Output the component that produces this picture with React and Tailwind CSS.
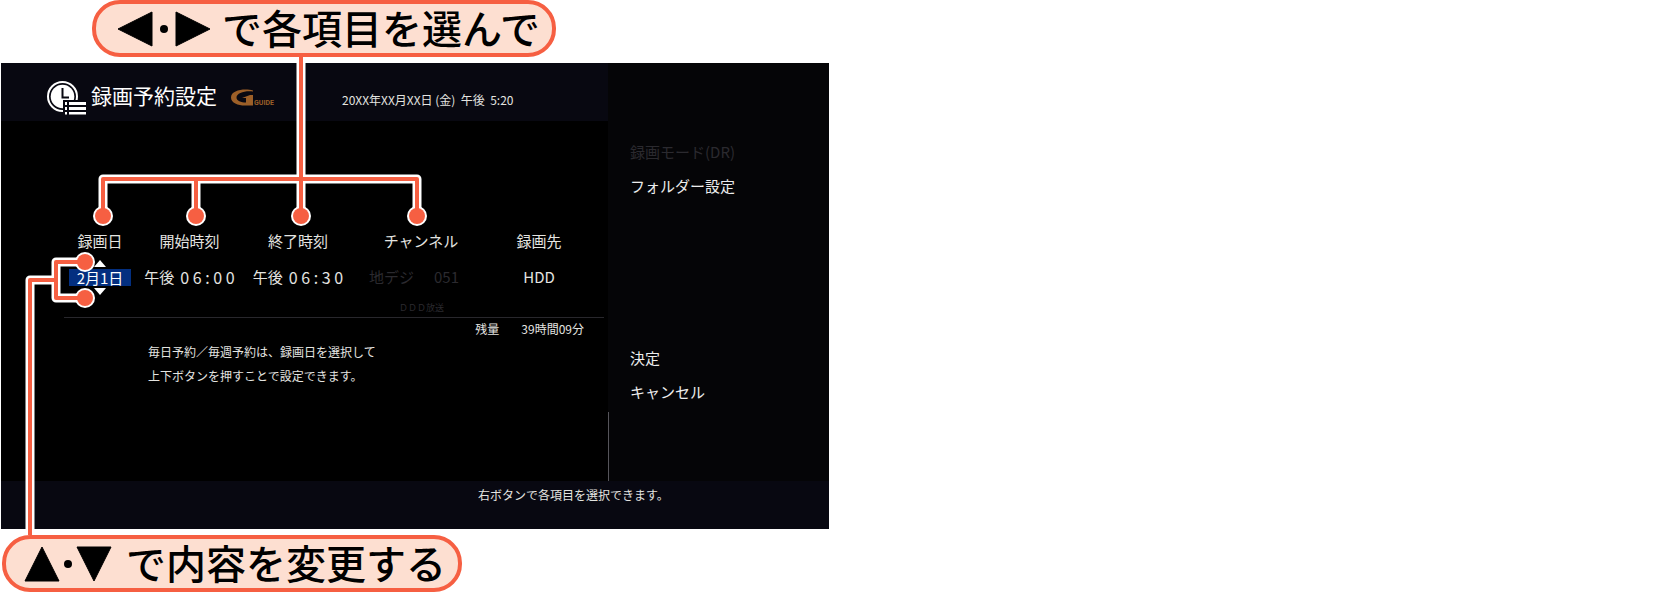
import { clsx } from 'clsx'

const columns = [
  { label: '録画日', width: 'w-[62px]' },
  { label: '開始時刻', width: 'w-[117px]' },
  { label: '終了時刻', width: 'w-[100px]' },
  { label: 'チャンネル', width: 'w-[146px]' },
  { label: '録画先', width: 'w-[90px]' },
]

const menuTop = [
  { label: '録画モード(DR)', disabled: true },
  { label: 'フォルダー設定' },
]

const menuBottom = [{ label: '決定' }, { label: 'キャンセル' }]

function ClockListIcon() {
  return (
    <svg viewBox="0 0 40 34" className="w-10 h-[34px] shrink-0" aria-hidden="true">
      <circle cx="15.5" cy="15.5" r="14.5" fill="none" stroke="#fff" strokeWidth="2" />
      <circle cx="15.5" cy="15.5" r="11.8" fill="#fff" />
      <path d="M15.500 7v9.500H22" fill="none" stroke="#080811" strokeWidth="2" />
      <path d="M16 19h24v15H16z" fill="#080811" />
      <path d="M18 21h2v3h-2zM18 26h2v3h-2zM18 31h2v2.500h-2z" fill="#fff" />
      <path d="M22 21h17v3H22zM22 26h17v3H22zM22 31h17v2.500H22z" fill="#fff" />
    </svg>
  )
}

function GuideLogo() {
  return (
    <svg viewBox="0 0 46 18" className="w-[46px] h-[18px] shrink-0" role="img" aria-label="G GUIDE">
      <path
        d="M22 1.500C14-.8 0 .8 0 8.500c0 5.500 7 8 14 8h8V6h-3l-8 3h4v4.500c-5 0-9.500-1.500-9.500-5C5.500 4 14 1.500 22 2.500z"
        fill="#9c5f28"
      />
      <text x="23" y="16" fill="#9c5f28" fontSize="7" fontWeight="700" fontFamily="Roboto, sans-serif">
        GUIDE
      </text>
    </svg>
  )
}

function Callout({ children, className }) {
  return (
    <div
      className={clsx(
        'flex items-center w-fit h-[57px] rounded-[28px] border-4 border-[#f65f42] bg-[#fddfd1] text-black text-[40px] leading-none font-medium whitespace-nowrap',
        className
      )}
    >
      {children}
    </div>
  )
}

function LeftRightKeys() {
  return (
    <svg viewBox="0 0 92 36" className="w-[92px] h-9 shrink-0" role="img" aria-label="左・右">
      <path d="M0 18 34 1v34zM58 1l34 17-34 17z" stroke="#000" strokeLinejoin="round" />
      <circle cx="46" cy="18" r="4" />
    </svg>
  )
}

function UpDownKeys() {
  return (
    <svg viewBox="0 0 88 36" className="w-[88px] h-9 shrink-0" role="img" aria-label="上・下">
      <path d="M18 1l17 34H1zM53 1h34L70 35z" stroke="#000" strokeLinejoin="round" />
      <circle cx="44" cy="18" r="4" />
    </svg>
  )
}

// Leader lines from the two callouts to the fields they explain
function Leaders() {
  const lines =
    'M301 57V216M103 216V179H417V216M196 179V216M30 535V280H56M85 262H56V298H85'
  const dots = [
    [103, 216],
    [196, 216],
    [301, 216],
    [417, 216],
    [85, 262],
    [85, 298],
  ]
  return (
    <svg viewBox="0 0 829 592" className="absolute left-0 top-0 w-[829px] h-[592px] pointer-events-none" fill="none" aria-hidden="true">
      <path d={lines} stroke="#fff" strokeWidth="9" strokeLinejoin="round" />
      {dots.map(([x, y]) => (
        <circle key={`${x}-${y}`} cx={x} cy={y} r="10" fill="#fff" />
      ))}
      <path d={lines} stroke="#f65f42" strokeWidth="4" strokeLinejoin="round" />
      {dots.map(([x, y]) => (
        <circle key={`${x}-${y}`} cx={x} cy={y} r="8" fill="#f65f42" />
      ))}
    </svg>
  )
}

function Spinner({ value }) {
  return (
    <div className="flex flex-col items-center gap-0.5">
      <button type="button" aria-label="次の日" className="block">
        <svg viewBox="0 0 12 7" className="w-3 h-[7px]" fill="#fff">
          <path d="M6 0l6 7H0z" />
        </svg>
      </button>
      <span className="w-full h-[17px] leading-[17px] bg-[#032f80] text-white">{value}</span>
      <button type="button" aria-label="前の日" className="block">
        <svg viewBox="0 0 12 7" className="w-3 h-[7px]" fill="#fff">
          <path d="M0 0h12L6 7z" />
        </svg>
      </button>
    </div>
  )
}

function Time({ half, digits }) {
  return (
    <div className="flex items-center justify-center gap-1.5">
      <span>{half}</span>
      <span className="text-base leading-6">{digits}</span>
    </div>
  )
}

function MenuItem({ label, disabled }) {
  return (
    <button
      type="button"
      disabled={disabled}
      className={clsx('block h-[34px] text-left text-[15px]', disabled ? 'text-[#2b2a2f]' : 'text-[#ececec]')}
    >
      {label}
    </button>
  )
}

export default function App() {
  return (
    <main className="relative w-full max-w-[829px] font-['Noto_Sans_CJK_JP',sans-serif]">
      <Callout className="ml-[92px] pl-[22px] pr-3 gap-3">
        <LeftRightKeys />
        <span className="pb-1">で各項目を選んで</span>
      </Callout>

      <section className="mt-1.5 ml-px bg-black text-[#e4e4e0]">
        <div className="flex bg-[#050507]">
          <div className="flex-1 min-w-0 bg-black">
            <header className="flex items-center h-[58px] pl-[46px] pt-3 bg-[#080811]">
              <ClockListIcon />
              <h1 className="ml-1 pb-1.5 text-[21px] leading-none text-white whitespace-nowrap">録画予約設定</h1>
              <div className="ml-3.5">
                <GuideLogo />
              </div>
              <time className="ml-[65px] pt-1 text-xs font-['Liberation_Sans_Narrow','Noto_Sans_CJK_JP',sans-serif] whitespace-pre">
                20XX年XX月XX日 (金)  午後  5:20
              </time>
            </header>

            <div className="pl-[5px] pt-[108px] ml-[63px] mr-1 border-b border-[#28272c]">
              <table className="table-fixed w-[515px] text-[15px] text-center whitespace-nowrap">
                <thead>
                  <tr>
                    {columns.map((c) => (
                      <th key={c.label} scope="col" className={clsx('h-6 p-0 leading-6 font-normal', c.width)}>
                        {c.label}
                      </th>
                    ))}
                  </tr>
                </thead>
                <tbody>
                  <tr className="h-12">
                    <td className="p-0">
                      <Spinner value="2月1日" />
                    </td>
                    <td className="p-0">
                      <Time half="午後" digits="0 6 : 0 0" />
                    </td>
                    <td className="p-0">
                      <Time half="午後" digits="0 6 : 3 0" />
                    </td>
                    <td className="p-0 text-[#2b2a2f]">
                      <div className="flex gap-5 pl-[21px]">
                        <span>地デジ</span>
                        <span>051</span>
                      </div>
                    </td>
                    <td className="p-0">HDD</td>
                  </tr>
                </tbody>
              </table>
              <p className="pl-[330px] h-4 text-[9px] leading-[14px] text-[#2b2a2f]">ＤＤＤ放送</p>
            </div>

            <dl className="flex justify-end gap-[22px] pr-6 text-xs leading-[22px]">
              <dt>残量</dt>
              <dd>39時間09分</dd>
            </dl>
            <p className="pl-[147px] text-xs leading-6">
              毎日予約／毎週予約は、録画日を選択して
              <br />
              上下ボタンを押すことで設定できます。
            </p>
          </div>

          <div className="self-end w-px h-[69px] bg-[#55545a]" />

          <nav className="w-[220px] h-[418px] pl-[21px] pt-[72px]">
            {menuTop.map((item) => (
              <MenuItem key={item.label} {...item} />
            ))}
            <div className="mt-[138px]">
              {menuBottom.map((item) => (
                <MenuItem key={item.label} {...item} />
              ))}
            </div>
          </nav>
        </div>

        <footer className="h-12 pl-[477px] pt-[5px] bg-[#080811] text-xs leading-[18px]">
          右ボタンで各項目を選択できます。
        </footer>
      </section>

      <Callout className="mt-1.5 ml-0.5 pl-[18px] pr-3 gap-3.5">
        <UpDownKeys />
        <span className="pb-1">で内容を変更する</span>
      </Callout>

      <Leaders />
    </main>
  )
}
